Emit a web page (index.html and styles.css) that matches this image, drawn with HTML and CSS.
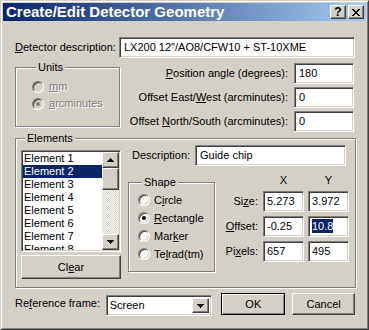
FILE: index.html
```html
<!doctype html>
<html lang="en">
    <head>
        <meta charset="utf-8">
        <title>Create/Edit Detector Geometry</title>
        <link rel="stylesheet" href="styles.css">
    </head>
    <body>
        <div class="window">
            <div class="titlebar">
                <span class="title">Create/Edit Detector Geometry</span>
                <span class="caption-btns">
                    <span class="cbtn raised">?</span>
                    <span class="cbtn raised"><svg width="8" height="7" viewBox="0 0 8 7"><path d="M0 0h2v1h-2zM6 0h2v1h-2zM1 1h2v1h-2zM5 1h2v1h-2zM2 2h4v1h-4zM3 3h2v1h-2zM2 4h4v1h-4zM1 5h2v1h-2zM5 5h2v1h-2zM0 6h2v1h-2zM6 6h2v1h-2z"/></svg></span>
                </span>
            </div>
            <div class="content">
                <div class="row-desc">
                    <label class="lbl-desc"><u>D</u>etector description:</label>
                    <div class="edit edit-desc">LX200 12"/AO8/CFW10 + ST-10XME</div>
                </div>
                <div class="row-pos">
                    <fieldset class="group units">
                        <legend>Units</legend>
                        <div class="radio-row disabled"><span class="radio"></span><span><u>m</u>m</span></div>
                        <div class="radio-row disabled"><span class="radio checked"></span><span><u>a</u>rcminutes</span></div>
                    </fieldset>
                    <div class="pos-grid">
                        <label><u>P</u>osition angle (degrees):</label><div class="edit">180</div>
                        <label>Offset East/<u>W</u>est (arcminutes):</label><div class="edit">0</div>
                        <label>Offset <u>N</u>orth/South (arcminutes):</label><div class="edit">0</div>
                    </div>
                </div>
                <fieldset class="group elements">
                    <legend>Elements</legend>
                    <div class="el-left">
                        <div class="listbox">
                            <ul class="items">
                                <li>Element 1</li>
                                <li class="selected">Element 2</li>
                                <li>Element 3</li>
                                <li>Element 4</li>
                                <li>Element 5</li>
                                <li>Element 6</li>
                                <li>Element 7</li>
                                <li>Element 8</li>
                            </ul>
                            <div class="scrollbar">
                                <span class="sb-btn raised"><svg width="7" height="4" viewBox="0 0 7 4"><path d="M3 0h1v1h1v1h1v1h1v1h-7v-1h1v-1h1v-1h1z"/></svg></span>
                                <span class="sb-thumb raised"></span>
                                <span class="sb-track"></span>
                                <span class="sb-btn raised"><svg width="7" height="4" viewBox="0 0 7 4"><path d="M0 0h7v1h-1v1h-1v1h-1v1h-1v-1h-1v-1h-1v-1h-1z"/></svg></span>
                            </div>
                        </div>
                        <div class="button raised btn-clear">Cl<u>e</u>ar</div>
                    </div>
                    <div class="el-right">
                        <div class="row-eldesc">
                            <label class="lbl-eldesc">Description:</label>
                            <div class="edit edit-eldesc">Guide chip</div>
                        </div>
                        <div class="el-lower">
                            <fieldset class="group shape">
                                <legend>Shape</legend>
                                <div class="radio-row"><span class="radio"></span><span>C<u>i</u>rcle</span></div>
                                <div class="radio-row"><span class="radio checked"></span><span><u>R</u>ectangle</span></div>
                                <div class="radio-row"><span class="radio"></span><span>Mar<u>k</u>er</span></div>
                                <div class="radio-row"><span class="radio"></span><span>Te<u>l</u>rad(tm)</span></div>
                            </fieldset>
                            <div class="xy-grid">
                                <span></span><span class="head">X</span><span class="head">Y</span>
                                <label>Si<u>z</u>e:</label><div class="edit">5.273</div><div class="edit">3.972</div>
                                <label><u>O</u>ffset:</label><div class="edit">-0.25</div><div class="edit"><span class="sel">10.8</span></div>
                                <label>Pi<u>x</u>els:</label><div class="edit">657</div><div class="edit">495</div>
                            </div>
                        </div>
                    </div>
                </fieldset>
                <div class="row-bottom">
                    <label class="lbl-ref">Re<u>f</u>erence frame:</label>
                    <div class="combo">
                        <span class="combo-text">Screen</span>
                        <span class="combo-btn raised"><svg width="7" height="4" viewBox="0 0 7 4"><path d="M0 0h7v1h-1v1h-1v1h-1v1h-1v-1h-1v-1h-1v-1h-1z"/></svg></span>
                    </div>
                    <div class="button btn-ok">OK</div>
                    <div class="button raised btn-cancel">Cancel</div>
                </div>
            </div>
        </div>
    </body>
</html>
```

FILE: styles.css
```css
body{margin:0;font:11px/13px "Liberation Sans",Arial,sans-serif;color:#000;}
u{text-decoration:underline;text-underline-offset:1px;}

/* window frame */
.window{width:369px;height:330px;box-sizing:border-box;background:#d4d0c8;border:1px solid;border-color:#d4d0c8 #404040 #404040 #d4d0c8;box-shadow:inset 1px 1px #fff,inset -1px -1px #808080;padding:2px;overflow:hidden;}
.titlebar{height:18px;display:flex;align-items:center;justify-content:space-between;padding:0 2px 0 3px;background:linear-gradient(to right,#0a246a,#a6caf0);}
.title{color:#fff;font-weight:bold;font-size:15px;line-height:18px;white-space:nowrap;}
.caption-btns{display:flex;gap:2px;}
.cbtn{width:16px;height:14px;box-sizing:border-box;display:flex;align-items:center;justify-content:center;font-weight:bold;font-size:12px;line-height:12px;}

/* 3d edges */
.raised{background:#d4d0c8;border:1px solid;border-color:#fff #404040 #404040 #fff;box-shadow:inset -1px -1px #808080;}
.edit{box-sizing:border-box;height:21px;background:#fff;border:1px solid;border-color:#808080 #fff #fff #808080;box-shadow:inset 1px 1px #404040,inset -1px -1px #d4d0c8;padding:0 4px;line-height:19px;white-space:nowrap;overflow:hidden;}

.content{padding:16px 11px 0 12px;}

.row-desc{display:flex;align-items:center;}
.lbl-desc{width:104px;}
.edit-desc{width:236px;}

/* group boxes */
.group{margin:0;padding:0;min-width:0;box-sizing:border-box;border:1px solid #808080;box-shadow:1px 1px #fff,inset 1px 1px #fff;}
.group legend{padding:0 2px;margin-left:4px;line-height:13px;background:#d4d0c8;}

.row-pos{display:flex;margin-top:3px;}
.units{width:105px;height:66px;padding:4px 0 0 16px;}
.radio-row{display:flex;align-items:center;height:17px;gap:5px;}
.radio{width:12px;height:12px;box-sizing:border-box;border-radius:50%;border:1px solid;border-color:#808080 #fff #fff #808080;box-shadow:inset 1px 1px #404040,inset -1px -1px #d4d0c8;background:#fff;display:grid;place-items:center;flex:none;}
.radio.checked::after{content:"";width:4px;height:4px;border-radius:50%;background:#000;}
.disabled{color:#808080;text-shadow:1px 1px #fff;}
.disabled .radio{background:#d4d0c8;}
.disabled .radio.checked::after{background:#808080;}

.pos-grid{margin-left:auto;margin-right:1px;padding-top:2px;display:grid;grid-template-columns:auto 60px;column-gap:6px;row-gap:3px;align-items:center;}
.pos-grid label{text-align:right;white-space:nowrap;}

/* elements */
.elements{width:341px;height:156px;margin-right:-1px;padding:0 0 0 5px;display:flex;align-items:flex-start;}
.el-left{width:100px;margin-top:5px;}
.listbox{width:100px;height:102px;box-sizing:border-box;background:#fff;border:1px solid;border-color:#808080 #fff #fff #808080;box-shadow:inset 1px 1px #404040,inset -1px -1px #d4d0c8;display:flex;padding:1px;}
.items{list-style:none;margin:0;padding:0;flex:1;overflow:hidden;}
.items li{height:13px;line-height:13px;padding-left:1px;white-space:nowrap;}
.items li.selected{background:#0a246a;color:#fff;}
.scrollbar{width:17px;display:flex;flex-direction:column;}
.sb-btn{height:16px;box-sizing:border-box;display:flex;align-items:center;justify-content:center;flex:none;}
.sb-thumb{height:22px;box-sizing:border-box;flex:none;}
.sb-track{flex:1;background:repeating-conic-gradient(#fff 0 25%,#d4d0c8 0 50%) 0 0/2px 2px;}
.button{box-sizing:border-box;display:flex;align-items:center;justify-content:center;}
.btn-clear{width:100px;height:24px;margin-top:3px;}

.el-right{margin-left:7px;}
.row-eldesc{display:flex;align-items:center;padding-left:4px;}
.lbl-eldesc{width:63px;}
.edit-eldesc{width:151px;}
.el-lower{display:flex;align-items:flex-start;margin-top:8px;}
.shape{width:87px;height:96px;margin-top:2px;padding:2px 0 0 9px;}
.shape .radio-row{height:18px;gap:4px;}
.xy-grid{display:grid;grid-template-columns:44px 41px 41px;grid-template-rows:13px 21px 21px 21px;column-gap:4px;row-gap:4px;align-items:center;}
.xy-grid label{text-align:right;padding-right:1px;}
.xy-grid .head{text-align:center;}
.xy-grid .edit{padding:0 3px;}
.sel{background:#0a246a;color:#fff;padding:1px 0;}

/* bottom row */
.row-bottom{display:flex;align-items:flex-start;margin-top:5px;}
.lbl-ref{width:91px;line-height:20px;}
.combo{width:107px;height:21px;margin-top:2px;box-sizing:border-box;background:#fff;border:1px solid;border-color:#808080 #fff #fff #808080;box-shadow:inset 1px 1px #404040,inset -1px -1px #d4d0c8;display:flex;padding:2px;}
.combo-text{flex:1;padding-left:1px;line-height:15px;}
.combo-btn{width:17px;box-sizing:border-box;display:flex;align-items:center;justify-content:center;}
.btn-ok{width:64px;height:22px;margin-left:9px;border:1px solid #000;box-shadow:inset 1px 1px #fff,inset -1px -1px #808080;}
.btn-cancel{width:63px;height:22px;margin-left:7px;}
```
